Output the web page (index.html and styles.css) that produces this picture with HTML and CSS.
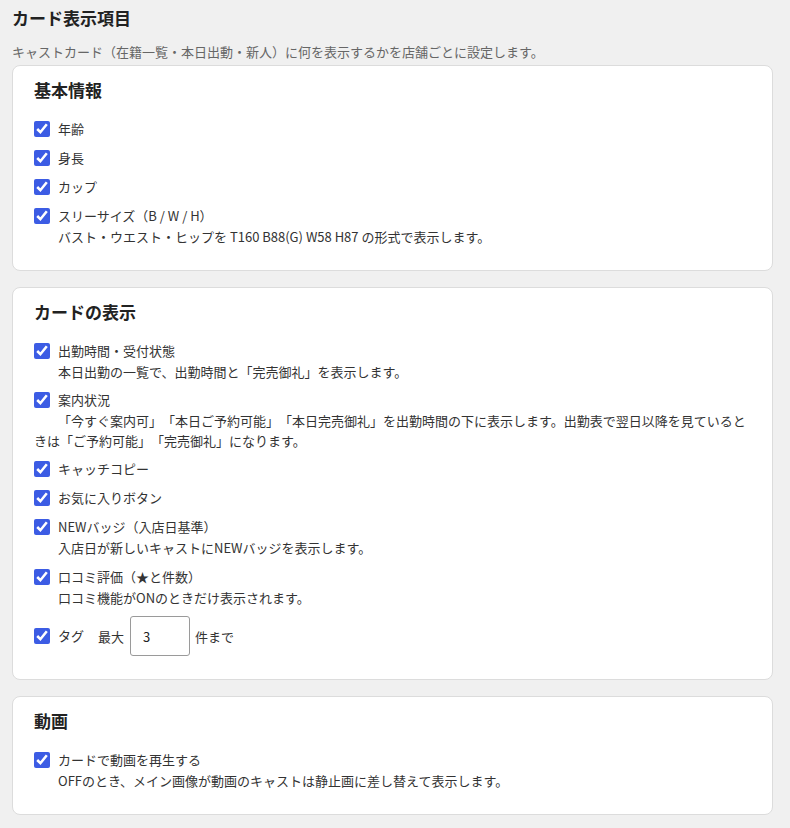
FILE: index.html
```html
<!DOCTYPE html>
<html lang="ja">
<head>
<meta charset="utf-8">
<title>カード表示項目</title>
<link rel="stylesheet" href="styles.css">
</head>
<body>
<div class="page">
  <h1 class="page-title">カード表示項目</h1>
  <p class="page-desc">キャストカード（在籍一覧・本日出動・新人）に何を表示するかを店舗ごとに設定します。</p>

  <section class="card">
    <h2 class="card-title">基本情報</h2>
    <div class="item"><label class="check"><input type="checkbox" checked><span>年齢</span></label></div>
    <div class="item"><label class="check"><input type="checkbox" checked><span>身長</span></label></div>
    <div class="item"><label class="check"><input type="checkbox" checked><span>カップ</span></label></div>
    <div class="item">
      <label class="check"><input type="checkbox" checked><span>スリーサイズ（B / W / H）</span></label>
      <div class="hint"><span class="hint-text">バスト・ウエスト・ヒップを T160 B88(G) W58 H87 の形式で表示します。</span></div>
    </div>
  </section>

  <section class="card">
    <h2 class="card-title">カードの表示</h2>
    <div class="item">
      <label class="check"><input type="checkbox" checked><span>出勤時間・受付状態</span></label>
      <div class="hint"><span class="hint-text">本日出勤の一覧で、出勤時間と「完売御礼」を表示します。</span></div>
    </div>
    <div class="item">
      <label class="check"><input type="checkbox" checked><span>案内状況</span></label>
      <div class="hint"><span class="hint-text">「今すぐ案内可」「本日ご予約可能」「本日完売御礼」を出勤時間の下に表示します。出勤表で翌日以降を見ているときは「ご予約可能」「完売御礼」になります。</span></div>
    </div>
    <div class="item"><label class="check"><input type="checkbox" checked><span>キャッチコピー</span></label></div>
    <div class="item"><label class="check"><input type="checkbox" checked><span>お気に入りボタン</span></label></div>
    <div class="item">
      <label class="check"><input type="checkbox" checked><span>NEWバッジ（入店日基準）</span></label>
      <div class="hint"><span class="hint-text">入店日が新しいキャストにNEWバッジを表示します。</span></div>
    </div>
    <div class="item">
      <label class="check"><input type="checkbox" checked><span>口コミ評価（★と件数）</span></label>
      <div class="hint"><span class="hint-text">口コミ機能がONのときだけ表示されます。</span></div>
    </div>
    <div class="item item-tag">
      <label class="check"><input type="checkbox" checked><span>タグ</span></label>
      <span class="tag-max">最大</span>
      <input class="num-input" type="text" value="3">
      <span class="tag-unit">件まで</span>
    </div>
  </section>

  <section class="card">
    <h2 class="card-title">動画</h2>
    <div class="item">
      <label class="check"><input type="checkbox" checked><span>カードで動画を再生する</span></label>
      <div class="hint"><span class="hint-text">OFFのとき、メイン画像が動画のキャストは静止画に差し替えて表示します。</span></div>
    </div>
  </section>
</div>
</body>
</html>
```
FILE: styles.css
```css
html, body {
  margin: 0;
  padding: 0;
  background: #f0f0f0;
}
body {
  font-family: "Noto Sans CJK JP", "Noto Sans", sans-serif;
  color: #333;
  font-size: 13px;
  text-spacing-trim: space-all;
}
.page {
  padding: 6px 17px 14px 12px;
}
.page-title {
  margin: 0;
  font-size: 17px;
  line-height: 24px;
  font-weight: 700;
  color: #222;
}
.page-desc {
  margin: 12px 0 3px;
  font-size: 13px;
  line-height: 20px;
  color: #666;
}
.card {
  background: #fff;
  border: 1px solid #dcdcdc;
  border-radius: 8px;
  padding: 12px 21px 23px;
  margin-bottom: 16px;
}
.card-title {
  margin: 0 0 17px;
  font-size: 17px;
  line-height: 24px;
  font-weight: 700;
  color: #222;
}
.item {
  margin-bottom: 9px;
}
.item:last-child {
  margin-bottom: 0;
}
.check {
  display: flex;
  align-items: center;
  gap: 8px;
  line-height: 20px;
  height: 20px;
  color: #333;
}
.check input {
  width: 16px;
  height: 16px;
  margin: 0;
  accent-color: #3c5ce4;
  flex: none;
}
.hint {
  margin-top: 1px;
  line-height: 19.5px;
  color: #333;
}
.hint-text {
  margin-left: 24px;
}
.item-tag {
  display: flex;
  align-items: center;
  height: 40px;
}
.tag-max {
  margin-left: 14px;
}
.num-input {
  box-sizing: border-box;
  width: 60px;
  height: 40px;
  margin: 0 5px 0 6px;
  padding: 0 12px;
  border: 1px solid #9a9a9a;
  border-radius: 3px;
  font-family: "Noto Sans CJK JP", "Noto Sans", sans-serif;
  font-size: 13px;
  color: #222;
  background: #fff;
}
```
